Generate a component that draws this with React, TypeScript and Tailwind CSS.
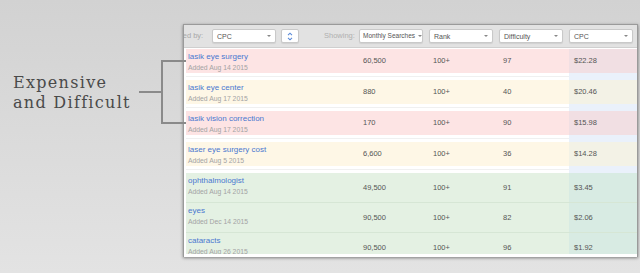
const rows = [
  { kw: "lasik eye surgery", added: "Added Aug 14 2015", searches: "60,500", rank: "100+", diff: "97", cpc: "$22.28", tone: "pink" },
  { kw: "lasik eye center", added: "Added Aug 17 2015", searches: "880", rank: "100+", diff: "40", cpc: "$20.46", tone: "yellow" },
  { kw: "lasik vision correction", added: "Added Aug 17 2015", searches: "170", rank: "100+", diff: "90", cpc: "$15.98", tone: "pink" },
  { kw: "laser eye surgery cost", added: "Added Aug 5 2015", searches: "6,600", rank: "100+", diff: "36", cpc: "$14.28", tone: "yellow" },
  { kw: "ophthalmologist", added: "Added Aug 14 2015", searches: "49,500", rank: "100+", diff: "91", cpc: "$3.45", tone: "green" },
  { kw: "eyes", added: "Added Dec 14 2015", searches: "90,500", rank: "100+", diff: "82", cpc: "$2.06", tone: "green" },
  { kw: "cataracts", added: "Added Aug 26 2015", searches: "90,500", rank: "100+", diff: "96", cpc: "$1.92", tone: "green" },
];

const tones: Record<string, { main: string; cpc: string }> = {
  pink: { main: "bg-[#fde4e4]", cpc: "bg-[#f1dfe3]" },
  yellow: { main: "bg-[#fef7e6]", cpc: "bg-[#f3f2e6]" },
  green: { main: "bg-[#e4f1e3]", cpc: "bg-[#d8ebe3]" },
};

function Select({ label, tight = false }: { label: string; tight?: boolean }) {
  return (
    <div
      className={`w-[64px] h-[14px] flex items-center ${tight ? "gap-[3px] px-[3px] text-[6.5px]" : "justify-between px-[4px] text-[7px]"} bg-white border border-[#c9c9c9] rounded-[2px] shadow-[0_1px_1px_rgba(0,0,0,0.08)] leading-none text-[#555] whitespace-nowrap overflow-hidden`}
    >
      <span>{label}</span>
      <span className="shrink-0 w-0 h-0 border-l-[2px] border-r-[2px] border-t-[2.5px] border-l-transparent border-r-transparent border-t-[#888]" />
    </div>
  );
}

function Row({ r, green, last }: { r: (typeof rows)[number]; green: boolean; last?: boolean }) {
  const t = tones[r.tone];
  return (
    <div className={`flex ${green ? "h-[30px]" : "h-[24px]"} ${green && !last ? "border-b border-[#d6e6d5]" : ""}`}>
      <div className={`flex flex-1 ${t.main}`}>
        <div className="w-[173px] pl-[2px] pt-[3px]">
          <div className="text-[8px] leading-[10px] text-[#4a78d0]">{r.kw}</div>
          <div className="text-[6.8px] leading-[9px] mt-[1px] text-[#a3a3a3]">{r.added}</div>
        </div>
        <div className="w-[70px] flex items-center pl-[4px] text-[7.5px] text-[#555]">{r.searches}</div>
        <div className="w-[70px] flex items-center pl-[4px] text-[7.5px] text-[#555]">{r.rank}</div>
        <div className="w-[70px] flex items-center pl-[4px] text-[7.5px] text-[#555]">{r.diff}</div>
      </div>
      <div className={`w-[68px] flex items-center pl-[5px] text-[7.5px] text-[#555] ${t.cpc}`}>{r.cpc}</div>
    </div>
  );
}

function Gap() {
  return (
    <div className="flex h-[7px]">
      <div className="flex-1 flex items-center bg-white">
        <div className="w-full h-px bg-[#f0f0f0]" />
      </div>
      <div className="w-[68px] bg-[#eaf1fb]" />
    </div>
  );
}

export default function App() {
  const top = rows.slice(0, 4);
  const greens = rows.slice(4);
  return (
    <div
      className="relative w-[640px] h-[273px] overflow-hidden bg-linear-to-b from-[#d2d2d2] to-[#e3e3e3] flex"
      style={{ fontFamily: '"Liberation Sans", Arial, sans-serif' }}
    >
      <div className="w-[183px] pt-[73px] pl-[13px]">
        <div
          className="text-[16px] leading-[20px] tracking-[1.3px] text-[#4a4a4a]"
          style={{ fontFamily: '"DejaVu Serif", serif' }}
        >
          <div>Expensive</div>
          <div>and Difficult</div>
        </div>
      </div>

      <div className="mt-[24px] w-[455px] h-[233px] flex flex-col bg-white border-l border-t border-r border-[#9a9a9a] shadow-[0_1px_3px_rgba(0,0,0,0.45)] overflow-hidden">
        <div className="h-[23px] flex items-center bg-[#e2e2e2] border-b border-[#cfcfcf] overflow-hidden">
          <span className="ml-[-15px] w-[43px] shrink-0 text-[7.5px] text-[#a8a8a8] whitespace-nowrap">Sorted by:</span>
          <Select label="CPC" />
          <div className="ml-[5px] w-[18px] h-[14px] flex items-center justify-center bg-white border border-[#c9c9c9] rounded-[2px] shadow-[0_1px_1px_rgba(0,0,0,0.08)]">
            <svg width="6" height="9" viewBox="0 0 6 9" fill="none" stroke="#5a8ad8" strokeWidth="1.1">
              <path d="M1 3.2 L3 1.2 L5 3.2" />
              <path d="M1 5.8 L3 7.8 L5 5.8" />
            </svg>
          </div>
          <span className="ml-[25px] w-[35px] shrink-0 text-[7.5px] text-[#b0b0b0] whitespace-nowrap">Showing:</span>
          <Select label="Monthly Searches" tight />
          <div className="ml-[6px]"><Select label="Rank" /></div>
          <div className="ml-[6px]"><Select label="Difficulty" /></div>
          <div className="ml-[6px]"><Select label="CPC" /></div>
        </div>

        <div className="h-[206px] overflow-hidden pl-[2px] pt-[1px]">
          {top.map((r) => (
            <div key={r.kw}>
              <Row r={r} green={false} />
              <Gap />
            </div>
          ))}
          {greens.map((r, i) => (
            <Row key={r.kw} r={r} green last={i === greens.length - 1} />
          ))}
        </div>
      </div>

      <svg className="absolute left-0 top-0" width="200" height="140" fill="none" stroke="#8a8a8a" strokeWidth="2">
        <path d="M139 92 H162" />
        <path d="M186 61 H162 V123 H186" />
      </svg>
    </div>
  );
}
